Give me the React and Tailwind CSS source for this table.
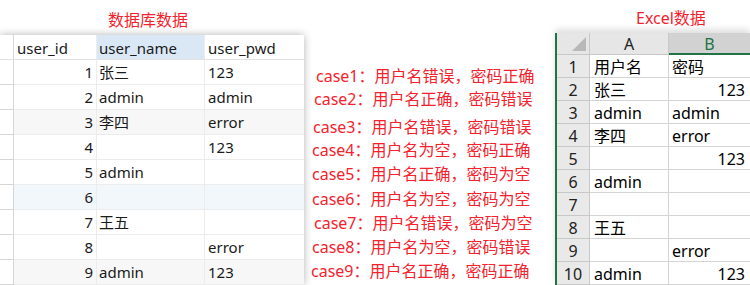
const font = { fontFamily: '"Noto Sans", "Noto Sans CJK SC", sans-serif' };

const dbRows = [
  { id: 1, name: "张三", pwd: "123", bg: "bg-white" },
  { id: 2, name: "admin", pwd: "admin", bg: "bg-white" },
  { id: 3, name: "李四", pwd: "error", bg: "bg-[#f7f7f7]" },
  { id: 4, name: "", pwd: "123", bg: "bg-white" },
  { id: 5, name: "admin", pwd: "", bg: "bg-white" },
  { id: 6, name: "", pwd: "", bg: "bg-[#f2f7fc]" },
  { id: 7, name: "王五", pwd: "", bg: "bg-white" },
  { id: 8, name: "", pwd: "error", bg: "bg-white" },
  { id: 9, name: "admin", pwd: "123", bg: "bg-[#f7f7f7]" },
];

// hand-placed annotation lines, they wobble a bit in the screenshot
const cases = [
  { text: "case1：用户名错误，密码正确", cls: "mt-[64px] ml-[12px]" },
  { text: "case2：用户名正确，密码错误", cls: "-mt-[1px] ml-[10px]" },
  { text: "case3：用户名错误，密码错误", cls: "mt-[4px] ml-[9px]" },
  { text: "case4：用户名为空，密码正确", cls: "-mt-[1px] ml-[8px]" },
  { text: "case5：用户名正确，密码为空", cls: "mt-0 ml-[8px]" },
  { text: "case6：用户名为空，密码为空", cls: "mt-[1px] ml-[8px]" },
  { text: "case7：用户名错误，密码为空", cls: "mt-0 ml-[10px]" },
  { text: "case8：用户名为空，密码错误", cls: "mt-0 ml-[8px]" },
  { text: "case9：用户名正确，密码正确", cls: "mt-0 ml-[7px]" },
];

const sheetRows = [
  ["用户名", "密码", false],
  ["张三", "123", true],
  ["admin", "admin", false],
  ["李四", "error", false],
  ["", "123", true],
  ["admin", "", false],
  ["", "", false],
  ["王五", "", false],
  ["", "error", false],
  ["admin", "123", true],
];

function DbTable() {
  return (
    <div className="w-[304px] bg-white shadow-[0_0_8px_rgba(0,0,0,0.3)] text-[15px] text-[#1a1a1a]">
      <div className="flex h-[25px] border-b border-[#e3e3e3]">
        <div className="w-[14px] border-r border-[#d6d6d6]" />
        <div className="w-[83px] border-r border-[#ececec] pl-[3px] leading-[26px]">user_id</div>
        <div className="w-[108px] border-r border-[#ececec] bg-[#dae8f6] pl-[2px] leading-[26px]">user_name</div>
        <div className="flex-1 pl-[3px] leading-[26px]">user_pwd</div>
      </div>
      {dbRows.map((r) => (
        <div key={r.id} className="flex h-[25px]">
          <div className="w-[14px] border-r border-b border-[#d6d6d6] bg-white" />
          <div className={`flex flex-1 border-b border-[#ececec] ${r.bg}`}>
            <div className="w-[83px] border-r border-[#ececec] pr-[3px] text-right leading-[25px]">{r.id}</div>
            <div className="w-[108px] border-r border-[#ececec] pl-[2px] leading-[25px]">{r.name}</div>
            <div className="flex-1 pl-[3px] leading-[25px]">{r.pwd}</div>
          </div>
        </div>
      ))}
    </div>
  );
}

function Sheet() {
  return (
    <div className="border-l-2 border-[#217346] bg-white text-[16px] text-black shadow-[0_-4px_6px_rgba(0,0,0,0.12)]">
      <div className="flex h-[22px] bg-[#e6e6e6]">
        <div className="relative w-[33px] border-r border-b border-[#c8c8c8]">
          <svg className="absolute bottom-[3px] right-[3px]" width="14" height="14" viewBox="0 0 14 14">
            <polygon points="14,0 14,14 0,14" fill="#b8b8b8" />
          </svg>
        </div>
        <div className="w-[79px] border-r border-b border-[#c8c8c8] text-center leading-[23px] text-[#222]">A</div>
        <div className="flex-1 border-b-2 border-[#217346] bg-[#d2d2d2] text-center leading-[22px] text-[#217346]">B</div>
      </div>
      {sheetRows.map(([a, b, right], i) => (
        <div key={i} className="flex h-[23px]">
          <div className="w-[33px] border-r border-b border-[#c8c8c8] bg-[#e9e9e9] text-center leading-[24px] text-[#222]">{i + 1}</div>
          <div className="w-[79px] border-r border-b border-[#d4d4d4] pl-[4px] leading-[24px]">{a}</div>
          <div className={`flex-1 border-b border-[#d4d4d4] leading-[24px] ${right ? "pr-[5px] text-right" : "pl-[3px]"}`}>{b}</div>
        </div>
      ))}
    </div>
  );
}

export default function App() {
  return (
    <div className="flex h-[285px] w-[750px] overflow-hidden bg-white" style={font}>
      <div className="flex w-[304px] shrink-0 flex-col">
        <div className="h-[37px] pl-[108px] pt-[8px] text-[16px] leading-[24px] text-[#f5222d]">数据库数据</div>
        <DbTable />
      </div>
      <div className="flex w-[251px] shrink-0 flex-col text-[16px] leading-[24px] text-[#f5222d]">
        {cases.map((c) => (
          <div key={c.text} className={`${c.cls} whitespace-nowrap`}>{c.text}</div>
        ))}
      </div>
      <div className="flex flex-1 flex-col">
        <div className="h-[37px] pl-[81px] pt-[6px] text-[16px] leading-[24px] text-[#f5222d]">Excel数据</div>
        <Sheet />
      </div>
    </div>
  );
}
